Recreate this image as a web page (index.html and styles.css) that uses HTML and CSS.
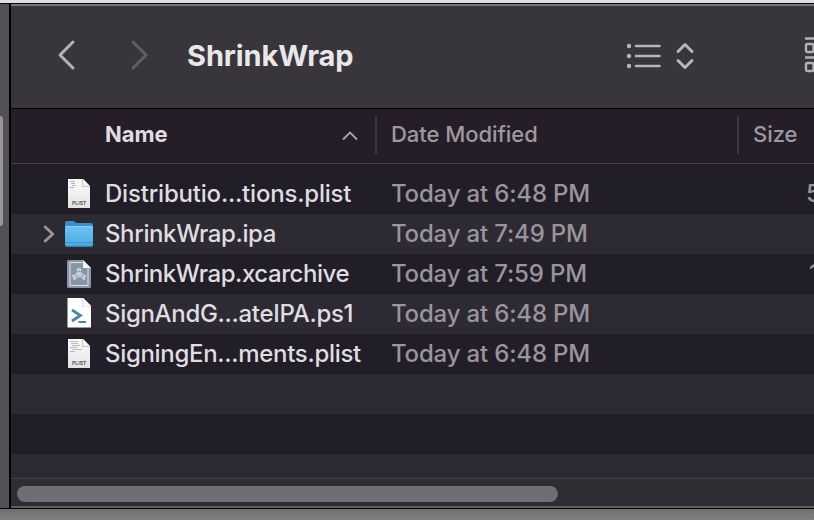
FILE: index.html
```html
<!DOCTYPE html>
<html lang="en">
<head>
<meta charset="utf-8">
<title>ShrinkWrap</title>
<link rel="stylesheet" href="styles.css">
</head>
<body>
<svg class="defs" width="0" height="0">
  <linearGradient id="paper" x1="0" y1="0" x2="0" y2="1"><stop offset="0" stop-color="#fafafa"/><stop offset=".55" stop-color="#efefef"/><stop offset="1" stop-color="#e2e2e2"/></linearGradient>
  <linearGradient id="blue" x1="0" y1="0" x2="0" y2="1"><stop offset="0" stop-color="#6ec3f2"/><stop offset="1" stop-color="#4ba9e2"/></linearGradient>
  <symbol id="plist" viewBox="0 0 30 32">
    <path d="M3 1h15l7 7.500v21.500H3z" fill="url(#paper)"/>
    <path d="M5 3.500h5M6 5.500h4M7 7.500h4M5 9.500h4" stroke="#b5b5b5" stroke-width="1"/>
    <path d="M17 1v8h8z" fill="#c9c9c9"/><path d="M18 1v7h7z" fill="#f4f4f4"/>
    <text x="14.200" y="27" text-anchor="middle" textLength="14.500" class="plist-label">PLIST</text>
  </symbol>
</svg>
<div class="desktop-top"></div>
<div class="window">
  <aside class="sidebar"><div class="side-thumb"></div></aside>
  <main class="content">
    <header class="toolbar">
      <svg class="nav" width="100" height="32" viewBox="0 0 100 32"><path d="M16 3 3 16 16 29" stroke="#b6b3b9"/><path d="M76 3 89 16 76 29" stroke="#605d63"/></svg>
      <h1>ShrinkWrap</h1>
      <svg class="view" width="70" height="32" viewBox="0 0 70 32">
        <g fill="#b8b5bb"><circle cx="3" cy="6" r="2.200"/><circle cx="3" cy="16" r="2.200"/><circle cx="3" cy="26" r="2.200"/></g>
        <path d="M10 6h23.500M10 16h23.500M10 26h23.500" stroke-width="2.600"/>
        <path d="M52 11.500 59 4.500 66 11.500M52 20.500 59 27.500 66 20.500" stroke-width="3"/>
      </svg>
      <svg class="group" width="10" height="38" viewBox="0 0 10 38"><path d="M1 2.500h14M1 21.500h14" /><rect x="2" y="8" width="7.500" height="8" rx="1.500"/><rect x="2" y="27" width="7.500" height="8" rx="1.500"/></svg>
    </header>
    <div class="columns">
      <div class="col name">Name<svg width="18" height="12" viewBox="0 0 18 12"><path d="M2 9.500 9 2.500 16 9.500"/></svg></div>
      <div class="col date">Date Modified</div>
      <div class="col size">Size</div>
    </div>
    <div class="list">
      <div class="row">
        <span class="arrow"></span><svg class="icon" width="30" height="32"><use href="#plist"/></svg>
        <span class="file f1">Distributio...tions.plist</span><span class="when">Today at 6:48 PM</span><span class="bytes">5</span>
      </div>
      <div class="row">
        <span class="arrow"><svg width="12" height="18" viewBox="0 0 12 18"><path d="M2.200 2 9.800 9 2.200 16"/></svg></span>
        <svg class="icon" width="30" height="32" viewBox="0 0 30 32"><path d="M0 5q0-2 2-2h6q1 0 2 1l1 1h15q2 0 2 2v6H0z" fill="#388fc9"/><path d="M0 9q0-1 1-1h26q1 0 1 1v17.500q0 2-2 2H2q-2 0-2-2z" fill="url(#blue)"/><path d="M1 8.500h26" stroke="#83d0f8"/><path d="M0 24.500h28M1 28h26" stroke="#3b96cd"/></svg>
        <span class="file f2">ShrinkWrap.ipa</span><span class="when">Today at 7:49 PM</span><span></span>
      </div>
      <div class="row">
        <span class="arrow"></span>
        <svg class="icon" width="30" height="32" viewBox="0 0 30 32"><path d="M3 2h15l8 8v18.500q0 1.500-1.500 1.500h-21Q2 30 2 28.500V3.500Q2 2 3 2z" fill="#8795a5"/><path d="M17.500 4.500H5v23h18V10" fill="none" stroke="#dce2e8"/><path d="M18 2v8h8z" fill="#f5f5f5"/><g fill="none" stroke="#e4e9ee" stroke-width="2.600" stroke-linecap="round"><path d="M15 11.500 9.500 20.500M13 11.500l6 9M8.500 18h11"/></g><g fill="none" stroke="#8795a5" stroke-width=".8"><path d="M15 11.500 9.500 20.500M13 11.500l6 9M8.500 18h11"/></g></svg>
        <span class="file f3">ShrinkWrap.xcarchive</span><span class="when">Today at 7:59 PM</span><span class="bytes one">1</span>
      </div>
      <div class="row">
        <span class="arrow"></span>
        <svg class="icon" width="30" height="32" viewBox="0 0 30 32"><path d="M2.500 0h15.500l8 8v21.500H2.500z" fill="#fff"/><path d="M15.500 0q2 1.500 1.500 8.500 6-.5 9 1V8l-8-8z" fill="#dedede"/><path d="M18 0v8h8z" fill="#f8f8f8"/><path d="M7 12l8.500 5.500L7 23" fill="none" stroke="#4788a8" stroke-width="2.700"/><path d="M13.500 24h7.500" stroke="#4788a8" stroke-width="2"/></svg>
        <span class="file f4">SignAndG...ateIPA.ps1</span><span class="when">Today at 6:48 PM</span><span></span>
      </div>
      <div class="row">
        <span class="arrow"></span>
        <svg class="icon" width="30" height="32"><use href="#plist"/><path d="M5 3.500h8M6 5.500h7M7 7.500h8M5 9.500h7M7 11.500h10M5 13.500h5" stroke="#bbb"/></svg>
        <span class="file f5">SigningEn...ments.plist</span><span class="when">Today at 6:48 PM</span><span></span>
      </div>
    </div>
    <div class="scrollbar"><div class="thumb"></div></div>
  </main>
</div>
<div class="desktop-bottom"></div>
</body>
</html>
```

FILE: styles.css
```css
* { box-sizing: border-box; }
body { margin: 0; width: 814px; height: 520px; overflow: hidden; font-family: Inter, sans-serif; background: #777; display: flex; flex-direction: column; }
.defs { position: absolute; }
.desktop-top { height: 3px; background: #e0e0df; flex: none; }
.window { height: 506px; flex: none; display: flex; border-top: 1px solid #08080c; border-bottom: 1px solid #050505; background: #2f2b35; }
.sidebar { width: 11px; flex: none; background: #545156; border-right: 2px solid #000; padding-top: 112px; }
.side-thumb { width: 3px; height: 110px; background: #98969b; border-radius: 0 3px 3px 0; }
.content { width: 803px; flex: none; overflow: hidden; display: flex; flex-direction: column; }
.toolbar { height: 105px; flex: none; display: flex; background: #39363b; border-top: 2px solid #77777b; border-bottom: 1px solid #000; padding-left: 45.5px; overflow: hidden; }
.nav { margin-top: 33px; flex: none; fill: none; stroke-width: 2.9; stroke-linecap: round; stroke-linejoin: round; }
h1 { margin: 31px 0 0 30.5px; width: 439px; flex: none; font-size: 29px; line-height: 38px; font-weight: 700; letter-spacing: -.1px; color: #e9e8e9; }
.view { margin-top: 34px; flex: none; fill: none; stroke: #b8b5bb; stroke-linecap: round; stroke-linejoin: round; }
.view g { stroke: none; }
.group { margin: 30px 0 0 108px; flex: none; fill: none; stroke: #b3b0b6; stroke-width: 2.4; }
.columns { height: 55px; flex: none; display: grid; grid-template-columns: 366px 362px 75px; border-bottom: 1px solid #453f4a; background: #251e29; padding-top: 7px; }
.col { height: 38px; line-height: 37px; font-size: 22px; color: #9d9a9f; font-weight: 500; letter-spacing: -.05px; white-space: nowrap; border-right: 2px solid #3c3640; padding-left: 14px; }
.name { padding: 0 16px 0 94px; display: flex; justify-content: space-between; font-weight: 650; color: #dfdde0; }
.name svg { margin-top: 14px; fill: none; stroke: #a9a6ab; stroke-width: 1.8; }
.size { border: 0; }
.list { height: 314px; flex: none; padding-top: 10px; background: repeating-linear-gradient(#221e28 0 40px, #2d2a33 40px 80px) 0 10px no-repeat #221e28; }
.row { height: 40px; display: grid; grid-template-columns: 54px 40px 286px 415px 20px; line-height: 40px; font-size: 24px; font-weight: 450; white-space: nowrap; }
.arrow { padding-left: 32px; display: flex; align-items: center; }
.arrow path { fill: none; stroke: #99969c; stroke-width: 2.8; stroke-linecap: round; stroke-linejoin: round; }
.icon { margin-top: 4px; }
.plist-label { font: 700 5px Inter, sans-serif; fill: #555; }
.file { color: #dfdde0; }
.f1 { letter-spacing: -.2px; }
.f2 { letter-spacing: -.38px; }
.f3 { letter-spacing: -.43px; }
.f4 { letter-spacing: -.31px; }
.f5 { letter-spacing: -.31px; }
.when, .bytes { color: #98959b; }
.when { letter-spacing: -.17px; }
.one { padding-left: 3px; }
.scrollbar { flex: none; height: 28px; border-top: 1px solid #45414b; background: #2f2c34; padding: 7px 0 0 6px; }
.thumb { width: 541px; height: 16px; border-radius: 8px; background: #706e73; }
.content::after { content: ""; height: 2px; background: #5f5c64; }
.desktop-bottom { flex: 1; background: linear-gradient(#6f6f6e, #80807f); }
```
